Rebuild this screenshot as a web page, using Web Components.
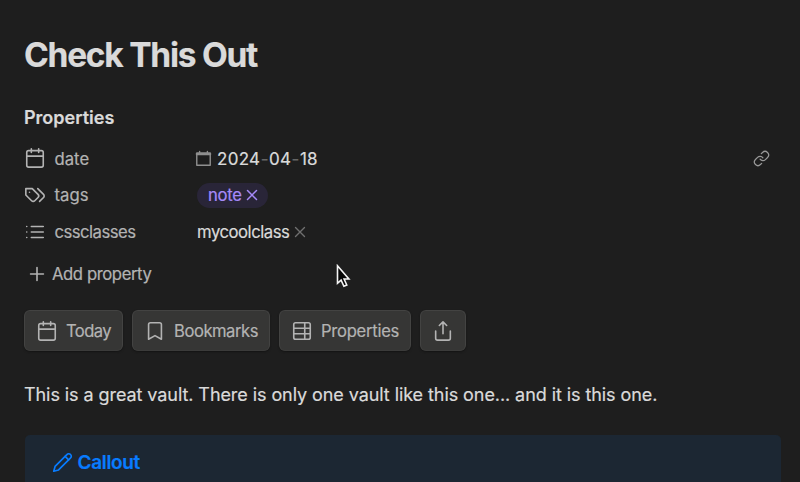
<!DOCTYPE html>
<html lang="en">
<head>
<meta charset="utf-8">
<title>Check This Out</title>
<style>
html,body{margin:0;background:#1e1e1e;overflow:hidden}
body{width:800px;height:482px;font-family:Inter,"Liberation Sans",sans-serif;-webkit-text-stroke:.2px currentColor;color:#dadada}
</style>
</head>
<body>
<note-view></note-view>
<script>
const ICONS = {
  calendar: '<path d="M8 2v4M16 2v4M3 10h18"/><rect x="3" y="4" width="18" height="18" rx="2"/>',
  tags: '<path d="M9 5H2v7l6.29 6.29c.94.94 2.48.94 3.42 0l3.58-3.58c.94-.94.94-2.48 0-3.42L9 5Z"/><path d="M6 9.01V9"/><path d="m15 5 6.3 6.3a2.4 2.4 0 0 1 0 3.4L17 19"/>',
  list: '<path d="M8 6h13M8 12h13M8 18h13M3 6h.01M3 12h.01M3 18h.01"/>',
  plus: '<path d="M5 12h14M12 5v14"/>',
  bookmark: '<path d="m19 21-7-4-7 4V5a2 2 0 0 1 2-2h10a2 2 0 0 1 2 2v16z"/>',
  table: '<rect x="3" y="3" width="18" height="18" rx="2"/><path d="M15 3v18M3 9h18M3 15h18"/>',
  share: '<path d="M4 12v8a2 2 0 0 0 2 2h12a2 2 0 0 0 2-2v-8M16 6l-4-4-4 4M12 2v13"/>',
  pencil: '<path d="M17 3a2.85 2.83 0 1 1 4 4L7.5 20.5 2 22l1.5-5.5Z"/><path d="m15 5 4 4"/>',
  link: '<path d="M10 13a5 5 0 0 0 7.54.54l3-3a5 5 0 0 0-7.07-7.07l-1.72 1.71"/><path d="M14 11a5 5 0 0 0-7.54-.54l-3 3a5 5 0 0 0 7.07 7.07l1.71-1.71"/>',
  x: '<path d="M18 6 6 18M6 6l12 12"/>',
  picker: '<path d="M2.5 4.5h19v17h-19z"/><path d="M3 5.5h18" stroke-width="4"/><path d="M6.5 2v2M17.5 2v2"/>'
};
const define = (name, html) => customElements.define(name, class extends HTMLElement {
  connectedCallback() {
    if (!this.shadowRoot) this.attachShadow({mode: 'open'}).innerHTML = html(this);
  }
});

define('ui-icon', el => `<style>
:host{display:inline-flex;flex:none}
svg{display:block;fill:none;stroke:currentColor;stroke-linecap:round;stroke-linejoin:round}
</style><svg width="${el.getAttribute('size') || 22}" height="${el.getAttribute('size') || 22}" viewBox="0 0 24 24" stroke-width="${el.getAttribute('weight') || 1.75}">${ICONS[el.getAttribute('name')]}</svg>`);

define('property-row', el => `<style>
:host{display:flex;align-items:center;height:36.7px;font-size:16.7px;line-height:24px}
.key{display:flex;align-items:center;gap:9px;width:173px;color:#b3b3b3}
.key ui-icon{margin-left:-.5px}
.key span{padding-top:var(--label-drop,0)}
.value{display:flex;align-items:center;flex:1}
</style><div class="key"><ui-icon name="${el.getAttribute('icon')}"></ui-icon><span>${el.getAttribute('label')}</span></div><div class="value"><slot></slot></div>`);

define('date-value', () => `<style>
:host{display:flex;align-items:center;letter-spacing:.3px;font-size:17px}
ui-icon{color:#8f8f8f;margin-right:5px;margin-left:-2px}
span{padding-top:1px}
i{font-style:normal;color:#666;display:inline-block;width:8.6px;text-align:center}
</style><ui-icon name="picker" size="17" weight="2"></ui-icon><span>2024<i>-</i>04<i>-</i>18</span>`);

define('tag-pill', () => `<style>
:host{display:flex;align-items:center;height:25px;box-sizing:border-box;width:71px;padding-left:11px;border-radius:13px;background:#292538;color:#a68af9;letter-spacing:-.3px}
ui-icon{margin-left:1.5px}
</style><slot></slot><ui-icon name="x" size="18" weight="2"></ui-icon>`);

define('list-value', () => `<style>
:host{display:flex;align-items:center;letter-spacing:-.48px}
ui-icon{margin-left:1.5px;color:#707070}
span{padding-top:1px}
</style><span><slot></slot></span><ui-icon name="x" size="18" weight="1.8"></ui-icon>`);

define('tool-button', el => `<style>
:host{display:flex;align-items:center;justify-content:center;gap:8px;box-sizing:border-box;height:41px;border:1px solid #434342;border-bottom-color:#3b3b3a;border-radius:6px;background:#363635;color:#b3b3b3;font-size:16.6px;box-shadow:0 1px 2px #141414}
</style><ui-icon name="${el.getAttribute('icon')}"></ui-icon><slot></slot>`);

define('call-out', () => `<style>
:host{display:flex;align-items:flex-start;box-sizing:border-box;height:80px;padding:16.5px 27px;gap:4.5px;border-radius:5px 5px 0 0;background:#1c2733;color:#087cff;font-size:19px;font-weight:600;line-height:22px;letter-spacing:-.33px}
</style><ui-icon name="pencil" size="21" weight="1.9"></ui-icon><span><slot></slot></span>`);

define('mouse-pointer', () => `<style>
:host{position:absolute;left:336px;top:264px}svg{display:block}
</style><svg width="16" height="25" viewBox="0 0 16 25"><path d="M1.5 1.8v17.5l3.6-3.2 2.8 6.2 2.9-1.3-2.7-6h4.8Z" fill="#050505" stroke="#f4f4f4" stroke-width="1.6"/></svg>`);

define('note-view', () => `<style>
:host{display:block;height:482px;overflow:hidden;box-sizing:border-box;padding:34.3px 19px 0 24px}
h1{margin:0;font-size:33.5px;line-height:42px;font-weight:700;letter-spacing:-1.25px}
h2{margin:29.3px 0 0;font-size:18px;line-height:24px;font-weight:600;letter-spacing:0}
.props{display:grid;grid-template-columns:1fr auto;margin-top:10.4px}
.link{color:#999;margin:10px 11px 0 0}
.add{display:flex;align-items:center;gap:4px;height:24px;margin:12px 0 0 2px;color:#b3b3b3;font-size:16.7px;letter-spacing:-.43px}
.tools{display:flex;gap:9px;margin-top:24.4px}
p{margin:31.6px 0 0;font-size:18px;line-height:24px;letter-spacing:-.075px;white-space:nowrap}
call-out{margin:28.4px 0 0 1px}
</style>
<h1>Check This Out</h1>
<h2>Properties</h2>
<div class="props"><div>
<property-row icon="calendar" label="date" style="--label-drop:1px"><date-value></date-value></property-row>
<property-row icon="tags" label="tags"><tag-pill>note</tag-pill></property-row>
<property-row icon="list" label="cssclasses" style="letter-spacing:-.52px;--label-drop:1px"><list-value>mycoolclass</list-value></property-row>
</div><ui-icon class="link" name="link" size="17"></ui-icon></div>
<div class="add"><ui-icon name="plus"></ui-icon>Add property</div>
<div class="tools">
<tool-button icon="calendar" style="width:99px;letter-spacing:-.55px">Today</tool-button>
<tool-button icon="bookmark" style="width:138px;letter-spacing:-.46px">Bookmarks</tool-button>
<tool-button icon="table" style="width:132px;letter-spacing:-.26px">Properties</tool-button>
<tool-button icon="share" style="width:46px;gap:0"></tool-button>
</div>
<p>This is a great vault. There is only one vault like this one... and it is this one.</p>
<call-out>Callout</call-out>
<mouse-pointer></mouse-pointer>`);
</script>
</body>
</html>
